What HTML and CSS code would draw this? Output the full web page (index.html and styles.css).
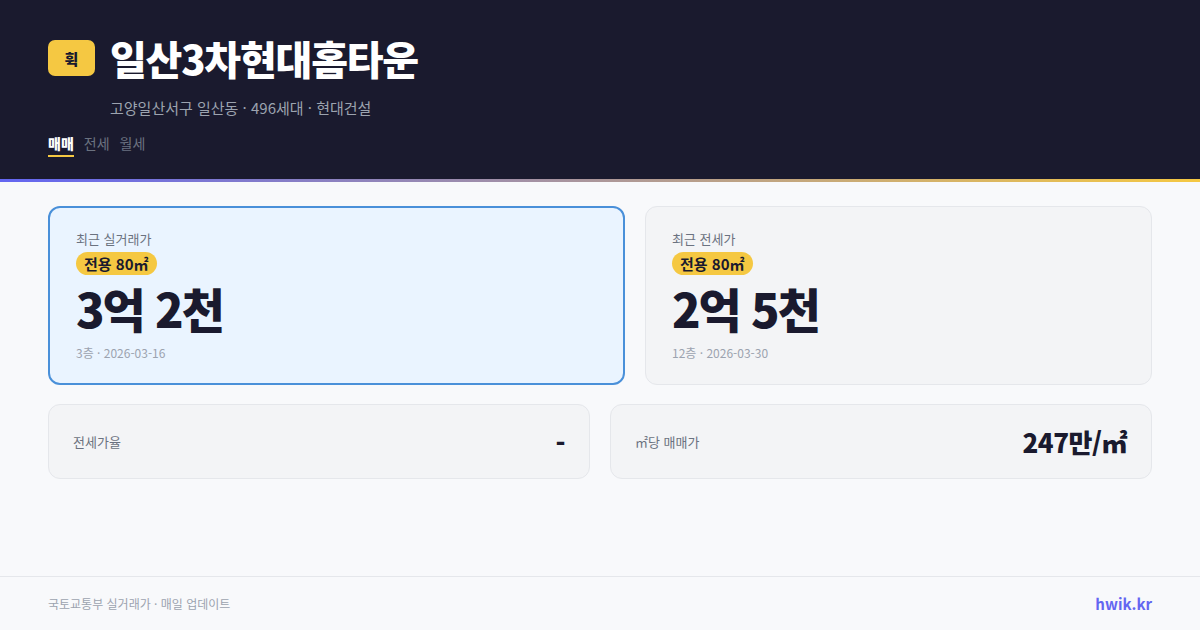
FILE: index.html
```html
<!DOCTYPE html>
<html lang="ko">
<head>
<meta charset="utf-8">
<link rel="stylesheet" href="styles.css">
</head>
<body>
<div class="page">
  <header class="hero">
    <div class="title-row">
      <div class="logo">휙</div>
      <h1 class="title">일산3차현대홈타운</h1>
    </div>
    <div class="subtitle">고양일산서구 일산동 · 496세대 · 현대건설</div>
    <nav class="tabs">
      <span class="tab active">매매</span>
      <span class="tab">전세</span>
      <span class="tab">월세</span>
    </nav>
  </header>
  <div class="accent"></div>
  <main class="content">
    <div class="top-row">
      <section class="card primary">
        <div class="card-label">최근 실거래가</div>
        <span class="badge">전용 80㎡</span>
        <div class="price">3억 2천</div>
        <div class="meta">3층 · 2026-03-16</div>
      </section>
      <section class="card">
        <div class="card-label">최근 전세가</div>
        <span class="badge">전용 80㎡</span>
        <div class="price">2억 5천</div>
        <div class="meta">12층 · 2026-03-30</div>
      </section>
    </div>
    <div class="bottom-row">
      <section class="stat">
        <span class="stat-label">전세가율</span>
        <span class="stat-value">-</span>
      </section>
      <section class="stat">
        <span class="stat-label">㎡당 매매가</span>
        <span class="stat-value">247만/㎡</span>
      </section>
    </div>
  </main>
  <footer class="footer">
    <span class="source">국토교통부 실거래가 · 매일 업데이트</span>
    <span class="brand">hwik.kr</span>
  </footer>
</div>
</body>
</html>
```

FILE: styles.css
```css
* { box-sizing: border-box; margin: 0; padding: 0; }
html, body { width: 1200px; height: 630px; overflow: hidden; }
body {
  font-family: "Noto Sans CJK KR", "Noto Sans", sans-serif;
  background: #f8f9fb;
  color: #1a1a2e;
}
.page { display: flex; flex-direction: column; height: 630px; }
.hero {
  background: #1a1a2e;
  height: 179px;
  padding: 34px 48px 0;
}
.title-row { display: flex; align-items: center; gap: 15px; }
.logo {
  width: 47px; height: 36px;
  background: #f5c842;
  border-radius: 7px;
  display: flex; align-items: center; justify-content: center;
  font-weight: 900; font-size: 15px; color: #1a1a2e;
}
.title {
  color: #ffffff;
  font-size: 40px;
  font-weight: 900;
  letter-spacing: -1.2px;
  line-height: 48px;
}
.subtitle {
  margin-top: 16px;
  margin-left: 62px;
  color: #9ca3af;
  font-size: 15px;
  line-height: 20px;
}
.tabs { display: flex; gap: 10px; margin-top: 15px; }
.tab {
  color: #6b7280;
  font-size: 14px;
  line-height: 20px;
  padding-bottom: 2px;
  border-bottom: 2px solid transparent;
}
.tab.active { color: #ffffff; font-weight: 900; border-bottom-color: #f5c842; }
.accent {
  height: 3px;
  background: linear-gradient(90deg, #6366f1, #f5c842);
}
.content {
  flex: 1;
  padding: 24px 48px 0;
  display: flex; flex-direction: column; gap: 19px;
}
.top-row { display: grid; grid-template-columns: 577fr 507fr; gap: 20px; }
.card {
  height: 179px;
  background: #f3f4f6;
  border: 1px solid #e5e7eb;
  border-radius: 12px;
  padding: 23px 26px;
}
.card.primary {
  background: #eaf4ff;
  border: 2px solid #4a90d9;
  padding: 22px 26px;
}
.card-label { color: #6b7280; font-size: 13px; line-height: 18px; margin-bottom: 4px; }
.badge {
  display: block;
  width: fit-content;
  background: #f5c842;
  color: #1a1a2e;
  font-weight: 700;
  font-size: 15px;
  line-height: 23px;
  padding: 0 8px;
  border-radius: 12px;
}
.price {
  font-size: 47px;
  font-weight: 900;
  letter-spacing: -2px;
  line-height: 50px;
  margin-top: 8px;
}
.meta { color: #9ca3af; font-size: 12px; line-height: 18px; margin-top: 11px; }
.bottom-row { display: grid; grid-template-columns: 1fr 1fr; gap: 20px; }
.stat {
  height: 75px;
  background: #f3f4f6;
  border: 1px solid #e5e7eb;
  border-radius: 12px;
  padding: 0 24px;
  display: flex; align-items: center; justify-content: space-between;
}
.stat-label { color: #6b7280; font-size: 13px; }
.stat-value { font-size: 26px; font-weight: 900; letter-spacing: -0.5px; }
.footer {
  height: 54px;
  border-top: 1px solid #e5e7eb;
  padding: 0 48px;
  display: flex; align-items: center; justify-content: space-between;
}
.source { color: #9ca3af; font-size: 12px; }
.brand { color: #6366f1; font-weight: 700; font-size: 15px; }
```
